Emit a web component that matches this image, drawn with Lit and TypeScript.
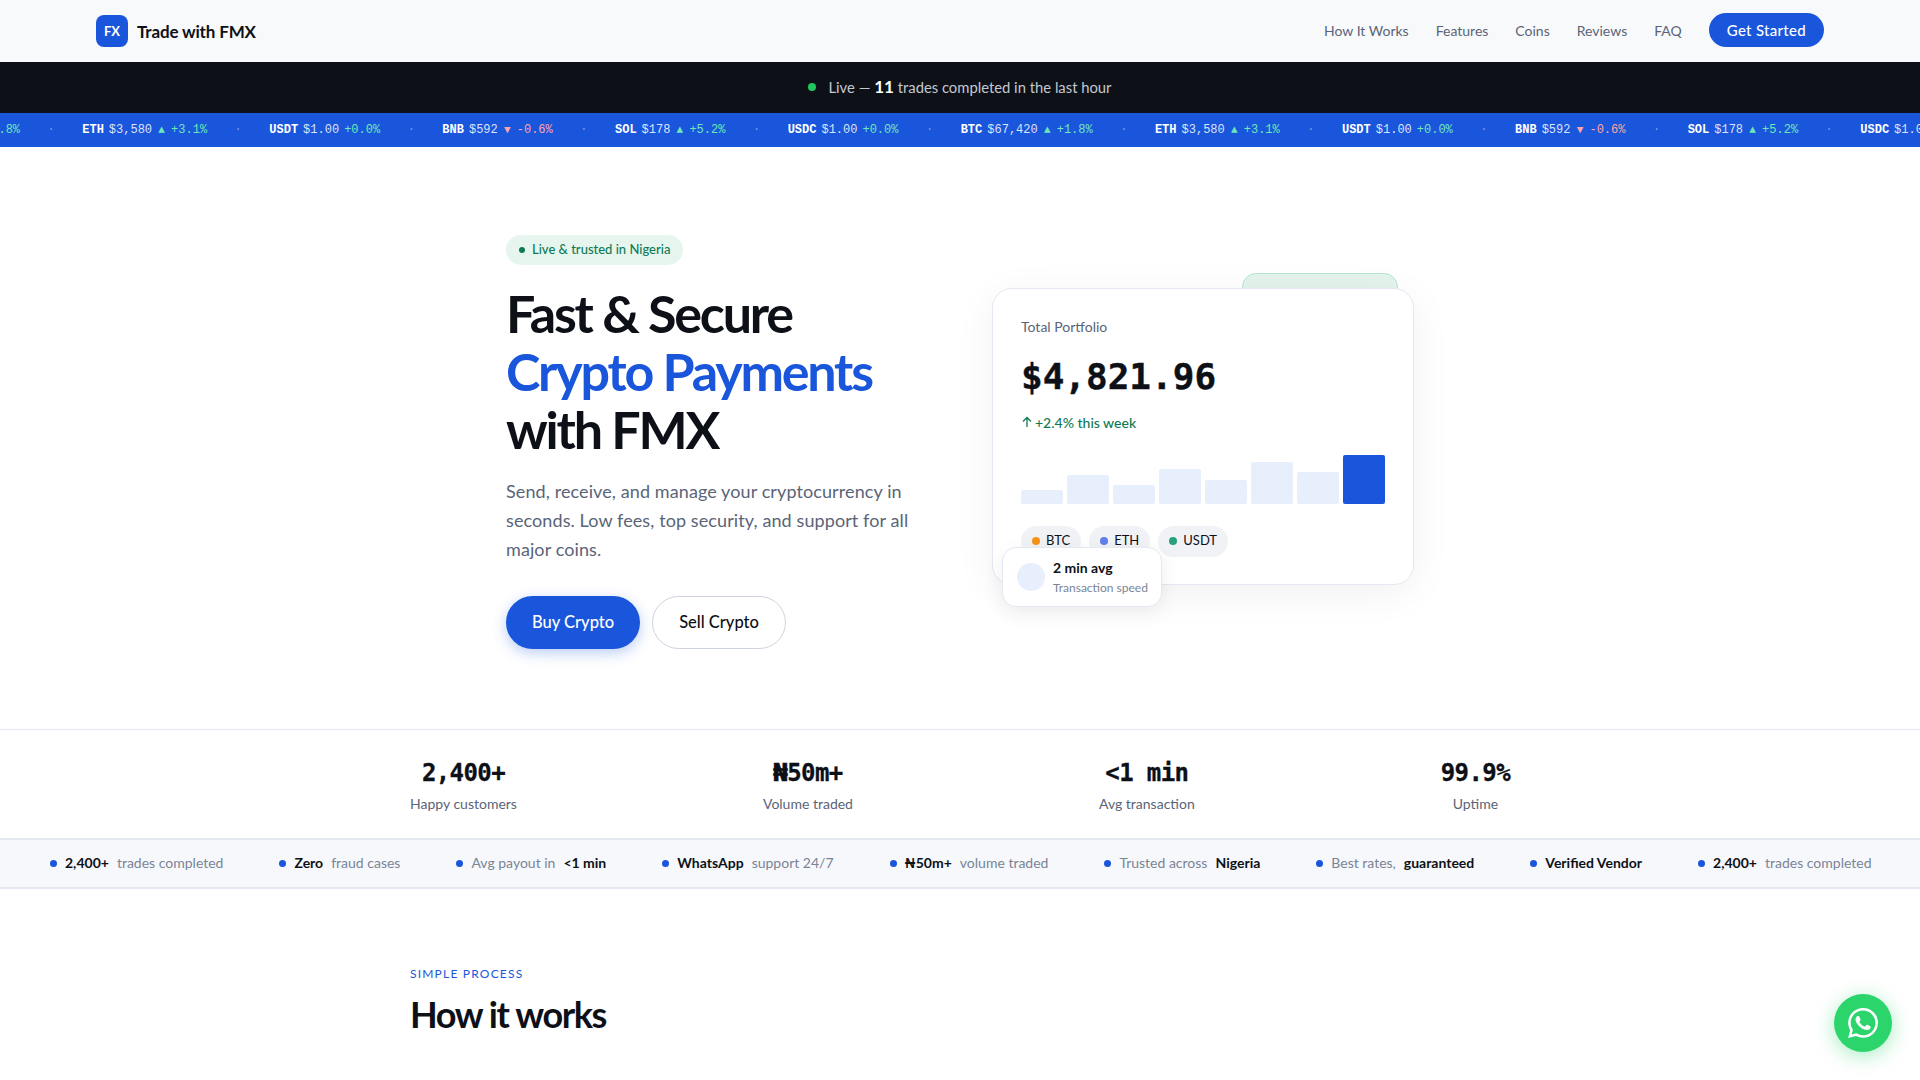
import { LitElement, css, html } from 'lit'
import { customElement } from 'lit/decorators.js'

const coins = [
  { sym: 'BTC', price: '$67,420', dir: '▲', chg: '+1.8%', down: false },
  { sym: 'ETH', price: '$3,580', dir: '▲', chg: '+3.1%', down: false },
  { sym: 'USDT', price: '$1.00', dir: '', chg: '+0.0%', down: false },
  { sym: 'BNB', price: '$592', dir: '▼', chg: '-0.6%', down: true },
  { sym: 'SOL', price: '$178', dir: '▲', chg: '+5.2%', down: false },
  { sym: 'USDC', price: '$1.00', dir: '', chg: '+0.0%', down: false },
]

const bars = [18, 39, 25, 46, 32, 56, 42, 65]

const stats = [
  ['2,400+', 'Happy customers'],
  ['₦50m+', 'Volume traded'],
  ['<1 min', 'Avg transaction'],
  ['99.9%', 'Uptime'],
]

const proofs = [
  [['b', '2,400+'], ['t', 'trades completed']],
  [['b', 'Zero'], ['t', 'fraud cases']],
  [['t', 'Avg payout in'], ['b', '<1 min']],
  [['b', 'WhatsApp'], ['t', 'support 24/7']],
  [['b', '₦50m+'], ['t', 'volume traded']],
  [['t', 'Trusted across'], ['b', 'Nigeria']],
  [['t', 'Best rates,'], ['b', 'guaranteed']],
  [['b', 'Verified Vendor']],
  [['b', '2,400+'], ['t', 'trades completed']],
]

@customElement('app-root')
export class AppRoot extends LitElement {
  protected render() {
    return html`
      <nav class="nav">
        <div class="brand">
          <span class="logo">FX</span>
          <span class="brand-name">Trade with FMX</span>
        </div>
        <div class="links">
          <a>How It Works</a>
          <a>Features</a>
          <a>Coins</a>
          <a>Reviews</a>
          <a>FAQ</a>
          <a class="cta">Get Started</a>
        </div>
      </nav>

      <div class="live">
        <span class="live-dot"></span>
        <span>Live — <b>11</b> trades completed in the last hour</span>
      </div>

      <div class="ticker">
        <div class="ticker-track">
          ${[...coins, ...coins, ...coins].map(
            (c) => html`
              <span class="tick">
                <b>${c.sym}</b>
                <span class="price">${c.price}</span>
                ${c.dir ? html`<span class=${c.down ? 'down arrow' : 'up arrow'}>${c.dir}</span>` : ''}
                <span class=${c.down ? 'down' : 'up'}>${c.chg}</span>
              </span>
              <span class="sep">·</span>
            `,
          )}
        </div>
      </div>

      <section class="hero">
        <div class="hero-copy">
          <div class="pill"><span class="pill-dot"></span>Live &amp; trusted in Nigeria</div>
          <h1>Fast &amp; Secure<br /><em>Crypto Payments</em><br />with FMX</h1>
          <p>Send, receive, and manage your cryptocurrency in seconds. Low fees, top security, and support for all major coins.</p>
          <div class="actions">
            <a class="btn primary">Buy Crypto</a>
            <a class="btn ghost">Sell Crypto</a>
          </div>
        </div>
        <div class="visual">
          <div class="back-card"></div>
          <div class="card">
            <div class="card-label">Total Portfolio</div>
            <div class="balance">$4,821.96</div>
            <div class="change">
              <svg width="12" height="12" viewBox="0 0 12 12" fill="none" stroke="currentColor" stroke-width="1.3">
                <path d="M6 11V1.5M2 5.5l4-4 4 4" />
              </svg>
              +2.4% this week
            </div>
            <div class="bars">
              ${bars.map(
                (h, i) => html`<span class=${i === bars.length - 1 ? 'bar on' : 'bar'} style="height:${h * 0.74}px"></span>`,
              )}
            </div>
            <div class="chips">
              <span class="chip"><i style="background:#f7931a"></i>BTC</span>
              <span class="chip"><i style="background:#627eea"></i>ETH</span>
              <span class="chip"><i style="background:#26a17b"></i>USDT</span>
            </div>
          </div>
          <div class="float">
            <span class="float-icon"></span>
            <div>
              <div class="float-title">2 min avg</div>
              <div class="float-sub">Transaction speed</div>
            </div>
          </div>
        </div>
      </section>

      <section class="stats">
        ${stats.map(
          ([n, l]) => html`<div class="stat"><div class="num">${n}</div><div class="lbl">${l}</div></div>`,
        )}
      </section>

      <div class="proof">
        ${proofs.map(
          (p) => html`
            <span class="proof-item">
              <span class="proof-dot"></span>
              ${p.map(([k, t]) => (k === 'b' ? html`<b>${t}</b>` : html`<span>${t}</span>`))}
            </span>
          `,
        )}
      </div>

      <section class="how">
        <div class="eyebrow">SIMPLE PROCESS</div>
        <h2>How it works</h2>
      </section>

      <a class="wa">
        <svg width="30" height="30" viewBox="0 0 24 24" fill="#fff">
          <path
            d="M17.472 14.382c-.297-.149-1.758-.867-2.03-.967-.273-.099-.471-.148-.67.15-.197.297-.767.966-.94 1.164-.173.199-.347.223-.644.075-.297-.15-1.255-.463-2.39-1.475-.883-.788-1.48-1.761-1.653-2.059-.173-.297-.018-.458.13-.606.134-.133.298-.347.446-.52.149-.174.198-.298.298-.497.099-.198.05-.371-.025-.52-.075-.149-.669-1.612-.916-2.207-.242-.579-.487-.5-.669-.51-.173-.008-.371-.01-.57-.01-.198 0-.52.074-.792.372-.272.297-1.04 1.016-1.04 2.479 0 1.462 1.065 2.875 1.213 3.074.149.198 2.096 3.2 5.077 4.487.709.306 1.262.489 1.694.625.712.227 1.36.195 1.871.118.571-.085 1.758-.719 2.006-1.413.248-.694.248-1.289.173-1.413-.074-.124-.272-.198-.57-.347m-5.421 7.403h-.004a9.87 9.87 0 01-5.031-1.378l-.361-.214-3.741.982.998-3.648-.235-.374a9.86 9.86 0 01-1.51-5.26c.001-5.45 4.436-9.884 9.888-9.884 2.64 0 5.122 1.03 6.988 2.898a9.825 9.825 0 012.893 6.994c-.003 5.45-4.437 9.884-9.885 9.884m8.413-18.297A11.815 11.815 0 0012.05 0C5.495 0 .16 5.335.157 11.892c0 2.096.547 4.142 1.588 5.945L.057 24l6.305-1.654a11.882 11.882 0 005.683 1.448h.005c6.554 0 11.89-5.335 11.893-11.893a11.821 11.821 0 00-3.48-8.413z"
          />
        </svg>
      </a>
    `
  }

  static styles = css`
    :host {
      display: block;
      height: 1080px;
      overflow: hidden;
      background: #fff;
      color: #0d1117;
      font-family: Lato, 'Liberation Sans', sans-serif;
    }

    .nav {
      display: flex;
      align-items: center;
      justify-content: space-between;
      height: 62px;
      padding: 0 96px;
      box-sizing: border-box;
      background: #f8f9fb;
    }

    .brand {
      display: flex;
      align-items: center;
      gap: 9px;
    }

    .logo {
      display: flex;
      align-items: center;
      justify-content: center;
      width: 32px;
      height: 32px;
      border-radius: 8px;
      background: #1a56db;
      color: #fff;
      font-size: 13px;
      font-weight: 700;
    }

    .brand-name {
      font-size: 17px;
      font-weight: 700;
      letter-spacing: -0.15px;
    }

    .links {
      display: flex;
      align-items: center;
      gap: 27px;
      margin-bottom: 2px;
      font-size: 14px;
      color: #5a6478;
    }

    .cta {
      padding: 0 18px;
      height: 34px;
      line-height: 34px;
      border-radius: 17px;
      background: #1a56db;
      color: #fff;
      font-size: 15px;
      font-weight: 500;
      letter-spacing: 0.3px;
    }

    .live {
      display: flex;
      align-items: center;
      justify-content: center;
      gap: 12px;
      height: 51px;
      padding-bottom: 2px;
      box-sizing: border-box;
      background: #0d1117;
      color: #c4c8d0;
      font-size: 14.8px;
    }

    .live b {
      color: #fff;
      font-size: 17px;
      font-weight: 700;
    }

    .live-dot {
      width: 8px;
      height: 8px;
      border-radius: 50%;
      background: #22c55e;
    }

    .ticker {
      height: 34px;
      overflow: hidden;
      background: #1a56db;
    }

    .ticker-track {
      display: flex;
      align-items: center;
      height: 100%;
      width: max-content;
      margin-left: -112px;
      font-family: 'Liberation Mono', monospace;
      font-size: 12px;
      color: rgba(255, 255, 255, 0.85);
    }

    .tick {
      display: flex;
      gap: 5px;
      white-space: nowrap;
    }

    .tick b {
      color: #fff;
      font-weight: 700;
    }

    .sep {
      margin: 0 27.5px;
      color: rgba(255, 255, 255, 0.4);
    }

    .up {
      color: #6ee7b7;
    }

    .down {
      color: #fca5a5;
    }

    .arrow {
      width: 9px;
      font-size: 11px;
      line-height: 14px;
      text-align: center;
    }

    .hero {
      display: grid;
      grid-template-columns: 422px 422px;
      gap: 64px;
      align-items: center;
      width: 908px;
      height: 582px;
      padding-top: 8px;
      box-sizing: border-box;
      margin: 0 auto;
    }

    .pill {
      display: inline-flex;
      align-items: center;
      gap: 7px;
      height: 30px;
      padding: 0 13px 2px;
      box-sizing: border-box;
      border-radius: 15px;
      background: #e6f6ef;
      color: #0e7a55;
      font-size: 13px;
      font-weight: 500;
    }

    .pill-dot {
      width: 6px;
      height: 6px;
      margin-top: 2px;
      border-radius: 50%;
      background: #0e7a55;
    }

    h1 {
      margin: 19px 0 19px;
      font-size: 52px;
      line-height: 58px;
      font-weight: 700;
      letter-spacing: -2.2px;
    }

    h1 em {
      font-style: normal;
      color: #1a56db;
    }

    p {
      margin: 0 0 32px;
      font-size: 18px;
      line-height: 29px;
      letter-spacing: 0.1px;
      color: #5a6478;
    }

    .actions {
      display: flex;
      gap: 12px;
    }

    .btn {
      display: flex;
      align-items: center;
      justify-content: center;
      height: 53px;
      padding: 0 26px 2px;
      box-sizing: border-box;
      border-radius: 27px;
      font-size: 16.5px;
      font-weight: 500;
    }

    .primary {
      background: #1a56db;
      color: #fff;
      box-shadow: 0 4px 14px rgba(26, 86, 219, 0.3);
    }

    .ghost {
      border: 1px solid #cdd3dd;
    }

    .visual {
      position: relative;
      height: 297px;
      margin-bottom: 12px;
    }

    .back-card {
      position: absolute;
      top: -15px;
      left: 250px;
      width: 156px;
      height: 60px;
      box-sizing: border-box;
      border: 1px solid #b5e6d0;
      border-radius: 14px;
      background: #e4f4ec;
    }

    .card {
      position: relative;
      height: 297px;
      box-sizing: border-box;
      padding: 29px 28px 28px;
      border: 1px solid #e4e8f0;
      border-radius: 20px;
      background: #fff;
      box-shadow: 0 8px 40px rgba(13, 17, 23, 0.06);
    }

    .card-label {
      font-size: 14px;
      line-height: 18px;
      color: #5a6478;
    }

    .balance {
      margin-top: 18px;
      font-family: 'DejaVu Sans Mono', monospace;
      font-size: 36px;
      line-height: 46px;
      font-weight: 700;
      -webkit-text-stroke: 0.4px #0d1117;
    }

    .change {
      display: flex;
      align-items: center;
      gap: 2px;
      margin-top: 14px;
      font-size: 14px;
      font-weight: 500;
      color: #0e7a55;
    }

    .bars {
      display: flex;
      align-items: flex-end;
      gap: 4px;
      height: 48px;
      margin-top: 25px;
    }

    .bar {
      flex: 1;
      border-radius: 2px;
      background: #e8effc;
    }

    .bar.on {
      background: #1a56db;
    }

    .chips {
      display: flex;
      gap: 8px;
      margin-top: 22px;
    }

    .chip {
      display: flex;
      align-items: center;
      gap: 6px;
      height: 31px;
      padding: 0 11px 2px;
      box-sizing: border-box;
      border-radius: 16px;
      background: #f0f2f6;
      font-size: 13px;
    }

    .chip i {
      width: 8px;
      height: 8px;
      margin-top: 2px;
      border-radius: 50%;
    }

    .float {
      position: absolute;
      left: 10px;
      top: 259px;
      display: flex;
      align-items: center;
      gap: 8px;
      width: 160px;
      height: 60px;
      box-sizing: border-box;
      padding: 0 14px;
      border: 1px solid #e4e8f0;
      border-radius: 14px;
      background: #fff;
      box-shadow: 0 6px 20px rgba(13, 17, 23, 0.07);
    }

    .float-icon {
      flex: none;
      width: 28px;
      height: 28px;
      border-radius: 50%;
      background: #e8effc;
    }

    .float-title {
      font-size: 14px;
      line-height: 18px;
      font-weight: 700;
    }

    .float-sub {
      margin-top: 3px;
      font-size: 12px;
      line-height: 15px;
      color: #7a8496;
      white-space: nowrap;
    }

    .stats {
      display: flex;
      justify-content: space-between;
      height: 109px;
      box-sizing: border-box;
      padding: 27px 410px 0;
      border-top: 1px solid #e4e8f0;
      text-align: center;
    }

    .num {
      font-family: 'DejaVu Sans Mono', monospace;
      font-size: 24px;
      line-height: 32px;
      font-weight: 700;
      letter-spacing: -0.6px;
      -webkit-text-stroke: 0.3px #0d1117;
    }

    .lbl {
      margin-top: 6px;
      font-size: 14px;
      line-height: 18px;
      color: #5a6478;
    }

    .proof {
      display: flex;
      align-items: center;
      gap: 56px;
      height: 51px;
      box-sizing: border-box;
      padding: 0 0 2px 50px;
      overflow: hidden;
      border-top: 2px solid #e4e8f0;
      border-bottom: 2px solid #e4e8f0;
      background: #f6f8fb;
      font-size: 14px;
      color: #7a8496;
    }

    .proof-item {
      display: flex;
      flex: none;
      align-items: center;
      gap: 8px;
      white-space: nowrap;
    }

    .proof-item b {
      color: #0d1117;
      font-weight: 700;
    }

    .proof-dot {
      width: 7px;
      height: 7px;
      margin-top: 2px;
      border-radius: 50%;
      background: #1a56db;
    }

    .how {
      padding: 77px 410px 0;
    }

    .eyebrow {
      font-size: 12px;
      line-height: 16px;
      letter-spacing: 1.2px;
      color: #1a56db;
    }

    h2 {
      margin: 9px 0 0;
      font-size: 36px;
      line-height: 46px;
      font-weight: 700;
      letter-spacing: -1.4px;
    }

    .wa {
      position: fixed;
      right: 28px;
      bottom: 28px;
      display: flex;
      align-items: center;
      justify-content: center;
      width: 58px;
      height: 58px;
      border-radius: 50%;
      background: #2bd56c;
      box-shadow: 0 4px 20px rgba(37, 211, 102, 0.4);
    }
  `
}

declare global {
  interface HTMLElementTagNameMap {
    'app-root': AppRoot
  }
}
